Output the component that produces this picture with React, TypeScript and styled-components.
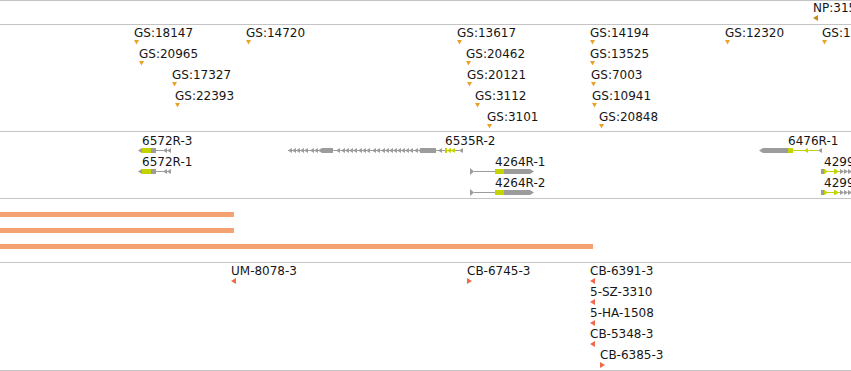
import React from 'react';
import styled, { createGlobalStyle } from 'styled-components';

const GlobalStyle = createGlobalStyle`
  html, body {
    margin: 0;
    padding: 0;
    background: #ffffff;
  }
  body {
    font-family: 'DejaVu Sans', 'Liberation Sans', sans-serif;
  }
`;

const LINE = '#c4c4c4';
const TEXT = '#161616';
const GREY = '#9c9c9c';
const LIME = '#c4d400';
const GOLD = '#e9a229';
const DARK_GOLD = '#c98a12';
const RED = '#f2684a';
const SALMON = '#f4a272';
const ROW = 21;

const Browser = styled.div`
  width: 851px;
  height: 371px;
  overflow: hidden;
  display: flex;
  flex-direction: column;
  border-top: 1px solid ${LINE};
  background: #fff;
`;

const Track = styled.div<{ $height: number }>`
  position: relative;
  flex: none;
  height: ${({ $height }) => $height}px;
  border-bottom: 1px solid ${LINE};
  overflow: hidden;
`;

// features sit on the track canvas at their genomic x position
const Feature = styled.div.attrs<{ $x: number; $y: number }>(({ $x, $y }) => ({
  style: { left: $x, top: $y },
}))<{ $x: number; $y: number }>`
  position: absolute;
  display: flex;
  flex-direction: column;
  align-items: flex-start;
`;

const Label = styled.span<{ $indent?: number }>`
  display: block;
  font-size: 12px;
  line-height: 14px;
  color: ${TEXT};
  white-space: nowrap;
  padding-left: ${({ $indent = 0 }) => $indent}px;
`;

const Glyph = styled.svg`
  display: block;
  margin-top: -1px;
  overflow: visible;
`;

const BarStack = styled.div`
  display: flex;
  flex-direction: column;
  gap: 11px;
  padding-top: 13px;
`;

const Bar = styled.div.attrs<{ $width: number }>(({ $width }) => ({
  style: { width: $width },
}))<{ $width: number }>`
  height: 5px;
  background: ${SALMON};
`;

type Dir = 'down' | 'left' | 'right';

const markerPoints: Record<Dir, string> = {
  down: '0,0 5,0 2.5,4.5',
  left: '0,3 5,0 5,6',
  right: '0,0 5,3 0,6',
};

const Marker: React.FC<{ dir: Dir; color: string }> = ({ dir, color }) => (
  <Glyph width={5} height={dir === 'down' ? 5 : 6} style={{ marginTop: 0 }}>
    <polygon points={markerPoints[dir]} fill={color} />
  </Glyph>
);

type Mark = { label: string; x: number; row: number; dir: Dir };

const gsMarks: Mark[] = [
  { label: 'GS:18147', x: 134, row: 0, dir: 'down' },
  { label: 'GS:14720', x: 246, row: 0, dir: 'down' },
  { label: 'GS:13617', x: 457, row: 0, dir: 'down' },
  { label: 'GS:14194', x: 590, row: 0, dir: 'down' },
  { label: 'GS:12320', x: 725, row: 0, dir: 'down' },
  { label: 'GS:1', x: 822, row: 0, dir: 'down' },
  { label: 'GS:20965', x: 139, row: 1, dir: 'down' },
  { label: 'GS:20462', x: 466, row: 1, dir: 'down' },
  { label: 'GS:13525', x: 590, row: 1, dir: 'down' },
  { label: 'GS:17327', x: 172, row: 2, dir: 'down' },
  { label: 'GS:20121', x: 467, row: 2, dir: 'down' },
  { label: 'GS:7003', x: 591, row: 2, dir: 'down' },
  { label: 'GS:22393', x: 175, row: 3, dir: 'down' },
  { label: 'GS:3112', x: 475, row: 3, dir: 'down' },
  { label: 'GS:10941', x: 592, row: 3, dir: 'down' },
  { label: 'GS:3101', x: 487, row: 4, dir: 'down' },
  { label: 'GS:20848', x: 599, row: 4, dir: 'down' },
];

const strainMarks: Mark[] = [
  { label: 'UM-8078-3', x: 231, row: 0, dir: 'left' },
  { label: 'CB-6745-3', x: 467, row: 0, dir: 'right' },
  { label: 'CB-6391-3', x: 590, row: 0, dir: 'left' },
  { label: '5-SZ-3310', x: 590, row: 1, dir: 'left' },
  { label: '5-HA-1508', x: 590, row: 2, dir: 'left' },
  { label: 'CB-5348-3', x: 590, row: 3, dir: 'left' },
  { label: 'CB-6385-3', x: 600, row: 4, dir: 'right' },
];

type Part =
  | { kind: 'rect'; x: number; w: number; color: string }
  | { kind: 'line'; x1: number; x2: number; color: string }
  | { kind: 'tri'; x: number; dir: 'left' | 'right'; color: string; tall?: boolean };

type Gene = {
  name: string;
  start: number;
  labelX: number;
  row: number;
  width: number;
  parts: Part[];
};

const tris = (xs: number[], dir: 'left' | 'right', color: string): Part[] =>
  xs.map((x) => ({ kind: 'tri', x, dir, color }));

const exon6572: Part[] = [
  { kind: 'line', x1: 18, x2: 33, color: GREY },
  { kind: 'tri', x: 0, dir: 'left', color: GREY },
  { kind: 'rect', x: 4, w: 9, color: LIME },
  { kind: 'rect', x: 13, w: 5, color: GREY },
  ...tris([25, 29], 'left', GREY),
];

const exon4264: Part[] = [
  { kind: 'tri', x: 0, dir: 'right', color: GREY, tall: true },
  { kind: 'line', x1: 4, x2: 25, color: GREY },
  { kind: 'rect', x: 25, w: 9, color: LIME },
  { kind: 'rect', x: 34, w: 26, color: GREY },
  { kind: 'tri', x: 60, dir: 'right', color: GREY },
];

const exon4299: Part[] = [
  { kind: 'rect', x: 0, w: 3, color: GREY },
  { kind: 'line', x1: 3, x2: 19, color: LIME },
  { kind: 'rect', x: 3, w: 1, color: LIME },
  ...tris([3, 14], 'right', LIME),
  { kind: 'rect', x: 13, w: 1, color: LIME },
  ...tris([19, 23, 27], 'right', GREY),
];

const genes: Gene[] = [
  { name: '6572R-3', start: 138, labelX: 142, row: 0, width: 34, parts: exon6572 },
  { name: '6572R-1', start: 138, labelX: 142, row: 1, width: 34, parts: exon6572 },
  {
    name: '6535R-2',
    start: 288,
    labelX: 445,
    row: 0,
    width: 176,
    parts: [
      { kind: 'line', x1: 0, x2: 175, color: GREY },
      ...tris([0, 4, 8, 12, 16, 22, 26, 30], 'left', GREY),
      { kind: 'rect', x: 34, w: 11, color: GREY },
      ...tris([48, 53, 57, 61, 65, 70, 74, 78, 84, 88, 93, 97], 'left', GREY),
      ...tris([101, 105, 109, 113, 117, 121, 126, 130], 'left', GREY),
      { kind: 'rect', x: 132, w: 16, color: GREY },
      ...tris([150], 'left', GREY),
      { kind: 'rect', x: 157, w: 2, color: LIME },
      ...tris([159, 163], 'left', LIME),
      { kind: 'line', x1: 157, x2: 168, color: LIME },
      ...tris([171], 'left', GREY),
    ],
  },
  { name: '4264R-1', start: 470, labelX: 495, row: 1, width: 64, parts: exon4264 },
  { name: '4264R-2', start: 470, labelX: 495, row: 2, width: 64, parts: exon4264 },
  {
    name: '6476R-1',
    start: 759,
    labelX: 788,
    row: 0,
    width: 63,
    parts: [
      { kind: 'line', x1: 34, x2: 59, color: LIME },
      { kind: 'rect', x: 29, w: 5, color: LIME },
      { kind: 'tri', x: 45, dir: 'left', color: LIME },
      { kind: 'tri', x: 59, dir: 'left', color: GREY },
    ],
  },
  { name: '4299R-1', start: 821, labelX: 824, row: 1, width: 31, parts: exon4299 },
  { name: '4299R-2', start: 821, labelX: 824, row: 2, width: 31, parts: exon4299 },
];

const renderPart = (p: Part, i: number) => {
  if (p.kind === 'rect') {
    return <rect key={i} x={p.x} y={1} width={p.w} height={5} fill={p.color} />;
  }
  if (p.kind === 'line') {
    return <rect key={i} x={p.x1} y={3} width={p.x2 - p.x1} height={1} fill={p.color} />;
  }
  const top = p.tall ? 0 : 1;
  const bottom = p.tall ? 7 : 6;
  const pts =
    p.dir === 'left'
      ? `${p.x},3.5 ${p.x + 4},${top} ${p.x + 4},${bottom}`
      : `${p.x},${top} ${p.x + 4},3.5 ${p.x},${bottom}`;
  return <polygon key={i} points={pts} fill={p.color} />;
};

const GeneFeature: React.FC<{ gene: Gene }> = ({ gene }) => (
  <Feature $x={gene.start} $y={2 + gene.row * ROW}>
    <Label $indent={gene.labelX - gene.start}>{gene.name}</Label>
    <Glyph width={gene.width} height={7}>
      {gene.name === '6476R-1' && (
        <polygon points="0,3.5 4,1 29,1 29,6 4,6" fill={GREY} />
      )}
      {gene.parts.map(renderPart)}
    </Glyph>
  </Feature>
);

const MarkFeature: React.FC<{ mark: Mark; top: number; color: string }> = ({
  mark,
  top,
  color,
}) => (
  <Feature $x={mark.x} $y={top + mark.row * ROW}>
    <Label>{mark.label}</Label>
    <Marker dir={mark.dir} color={color} />
  </Feature>
);

export default function App() {
  return (
    <>
      <GlobalStyle />
      <Browser>
        <Track $height={23}>
          <MarkFeature mark={{ label: 'NP:315', x: 813, row: 0, dir: 'left' }} top={0} color={DARK_GOLD} />
        </Track>
        <Track $height={106}>
          {gsMarks.map((m) => (
            <MarkFeature key={m.label + m.x} mark={m} top={1} color={GOLD} />
          ))}
        </Track>
        <Track $height={66}>
          {genes.map((g) => (
            <GeneFeature key={g.name} gene={g} />
          ))}
        </Track>
        <Track $height={63}>
          <BarStack>
            <Bar $width={234} />
            <Bar $width={234} />
            <Bar $width={593} />
          </BarStack>
        </Track>
        <Track $height={107}>
          {strainMarks.map((m) => (
            <MarkFeature key={m.label} mark={m} top={1} color={RED} />
          ))}
        </Track>
      </Browser>
    </>
  );
}
